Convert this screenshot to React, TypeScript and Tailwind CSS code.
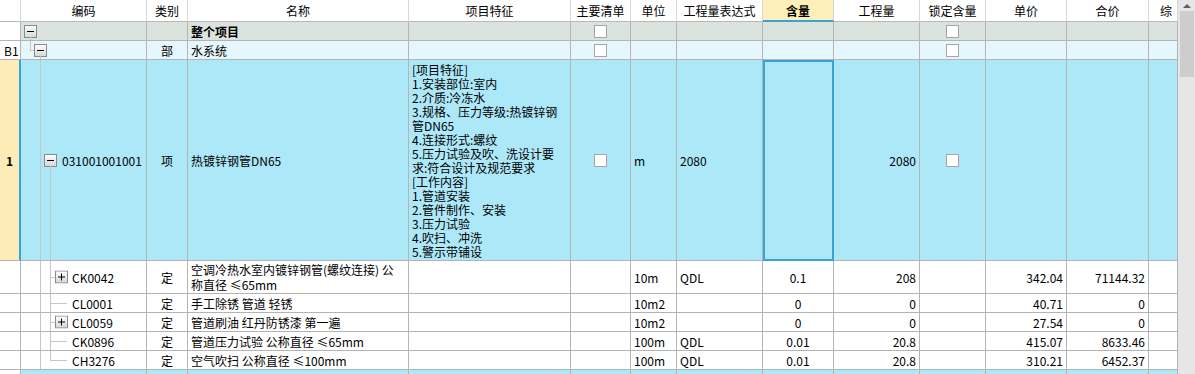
import React from "react";

const grid =
  "grid shrink-0 grid-cols-[21px_126px_41px_221px_162px_60px_46px_86px_71px_86px_66px_81px_82px_29px]";
const cell =
  "border-r border-b border-[#b4b4b4] flex items-center pt-px px-[3px] whitespace-nowrap overflow-hidden";
const line = "absolute bg-[#c6c6c6]";

const TreeBox = ({ plus = false }: { plus?: boolean }) => (
  <svg width="13" height="13" viewBox="0 0 13 13" className="block">
    <defs>
      <linearGradient id="tb" x1="0" y1="0" x2="0" y2="1">
        <stop offset="0" stopColor="#ffffff" />
        <stop offset="1" stopColor="#d6d6d6" />
      </linearGradient>
    </defs>
    <rect x="0.5" y="0.5" width="12" height="12" fill="url(#tb)" stroke="#8a8a8a" />
    <path d="M3 6.5h7" stroke="#000" strokeWidth="1" />
    {plus && <path d="M6.5 3v7" stroke="#000" strokeWidth="1" />}
  </svg>
);

const Check = () => (
  <span className="block w-[13px] h-[13px] bg-white border border-[#a6a6a6]" />
);

const features = [
  "[项目特征]",
  "1.安装部位:室内",
  "2.介质:冷冻水",
  "3.规格、压力等级:热镀锌钢",
  "管DN65",
  "4.连接形式:螺纹",
  "5.压力试验及吹、洗设计要",
  "求:符合设计及规范要求",
  "[工作内容]",
  "1.管道安装",
  "2.管件制作、安装",
  "3.压力试验",
  "4.吹扫、冲洗",
  "5.警示带铺设",
];

type Sub = {
  code: string;
  plus: boolean;
  name: React.ReactNode;
  unit: string;
  expr: string;
  hl: string;
  qty: string;
  price: string;
  total: string;
  tall?: boolean;
  last?: boolean;
};

const subs: Sub[] = [
  {
    code: "CK0042",
    plus: true,
    name: (
      <>
        空调冷热水室内镀锌钢管(螺纹连接) 公<br />
        称直径 ≤65mm
      </>
    ),
    unit: "10m",
    expr: "QDL",
    hl: "0.1",
    qty: "208",
    price: "342.04",
    total: "71144.32",
    tall: true,
  },
  { code: "CL0001", plus: false, name: "手工除锈 管道 轻锈", unit: "10m2", expr: "", hl: "0", qty: "0", price: "40.71", total: "0" },
  { code: "CL0059", plus: true, name: "管道刷油 红丹防锈漆 第一遍", unit: "10m2", expr: "", hl: "0", qty: "0", price: "27.54", total: "0" },
  { code: "CK0896", plus: false, name: "管道压力试验 公称直径 ≤65mm", unit: "100m", expr: "QDL", hl: "0.01", qty: "20.8", price: "415.07", total: "8633.46" },
  { code: "CH3276", plus: false, name: "空气吹扫 公称直径 ≤100mm", unit: "100m", expr: "QDL", hl: "0.01", qty: "20.8", price: "310.21", total: "6452.37", last: true },
];

const headers = ["", "编码", "类别", "名称", "项目特征", "主要清单", "单位", "工程量表达式", "含量", "工程量", "锁定含量", "单价", "合价", "综"];

export default function App() {
  return (
    <div className="flex w-[1195px] h-[374px] overflow-hidden bg-white text-[12px] text-black font-['Noto_Sans_CJK_SC','Liberation_Sans',sans-serif]">
      <div className="w-[1178px] flex flex-col">
        {/* header */}
        <div className={`${grid} h-[22px]`}>
          {headers.map((h, i) =>
            i === 8 ? (
              <div
                key={i}
                className="flex items-center justify-center pt-px bg-[#fdefb9] border-r border-[#d4d4d4] border-b-2 border-b-[#3aa3d5] font-bold"
              >
                {h}
              </div>
            ) : (
              <div
                key={i}
                className={`flex items-center pt-px whitespace-nowrap overflow-hidden border-r border-[#d8d8d8] border-b border-b-[#b8b8b8] ${
                  i === 13 ? "pl-[11px]" : "justify-center"
                }`}
              >
                {h}
              </div>
            )
          )}
        </div>

        {/* 整个项目 */}
        <div className={`${grid} h-[19px] bg-[#dbe3df]`}>
          <div className={`${cell} bg-white`} />
          <div className={`${cell} relative`}>
            <span className="absolute left-[3px] top-[3px]">
              <TreeBox />
            </span>
            <span className={`${line} left-[9px] top-[15px] w-px h-[4px]`} />
          </div>
          <div className={cell} />
          <div className={`${cell} font-bold`}>整个项目</div>
          <div className={cell} />
          <div className={`${cell} justify-center`}>
            <Check />
          </div>
          <div className={cell} />
          <div className={cell} />
          <div className={cell} />
          <div className={cell} />
          <div className={`${cell} justify-center`}>
            <Check />
          </div>
          <div className={cell} />
          <div className={cell} />
          <div className={cell} />
        </div>

        {/* 水系统 */}
        <div className={`${grid} h-[19px] bg-[#e5f7fc]`}>
          <div className={`${cell} bg-white pl-[4px]`}>B1</div>
          <div className={`${cell} relative`}>
            <span className={`${line} left-[9px] top-0 w-px h-[9px]`} />
            <span className={`${line} left-[9px] top-[9px] w-[4px] h-px`} />
            <span className="absolute left-[13px] top-[3px]">
              <TreeBox />
            </span>
            <span className={`${line} left-[19px] top-[15px] w-px h-[4px]`} />
          </div>
          <div className={`${cell} justify-center`}>部</div>
          <div className={cell}>水系统</div>
          <div className={cell} />
          <div className={`${cell} justify-center`}>
            <Check />
          </div>
          <div className={cell} />
          <div className={cell} />
          <div className={cell} />
          <div className={cell} />
          <div className={`${cell} justify-center`}>
            <Check />
          </div>
          <div className={cell} />
          <div className={cell} />
          <div className={cell} />
        </div>

        {/* 清单 1 */}
        <div className={`${grid} h-[201px] bg-[#ade8f9]`}>
          <div className={`${cell} bg-[#fdecb5] border-r-2 border-r-[#3aa3d5] justify-center font-bold`}>1</div>
          <div className={`${cell} relative pl-[41px]`}>
            <span className={`${line} left-[19px] top-0 w-px h-full`} />
            <span className="absolute left-[23px] top-[94px]">
              <TreeBox />
            </span>
            <span className={`${line} left-[29px] top-[106px] w-px h-[95px]`} />
            031001001001
          </div>
          <div className={`${cell} justify-center`}>项</div>
          <div className={cell}>热镀锌钢管DN65</div>
          <div className="border-r border-b border-[#b4b4b4] flex flex-col items-start pt-[3px] px-[3px] whitespace-nowrap overflow-hidden">
            {features.map((f) => (
              <span key={f} className="block h-[14px] leading-[14px]">
                {f}
              </span>
            ))}
          </div>
          <div className={`${cell} justify-center`}>
            <Check />
          </div>
          <div className={cell}>m</div>
          <div className={cell}>2080</div>
          <div className="border-2 border-[#3aa3d5]" />
          <div className={`${cell} justify-end`}>2080</div>
          <div className={`${cell} justify-center`}>
            <Check />
          </div>
          <div className={cell} />
          <div className={cell} />
          <div className={cell} />
        </div>

        {/* 定额 */}
        {subs.map((s) => (
          <div key={s.code} className={`${grid} ${s.tall ? "h-[33px]" : "h-[19px]"} bg-white`}>
            <div className={cell} />
            <div className={`${cell} relative pl-[51px]`}>
              <span className={`${line} left-[19px] top-0 w-px h-full`} />
              <span
                className={`${line} left-[29px] top-0 w-px ${s.last ? "h-1/2" : "h-full"}`}
              />
              <span className={`${line} left-[29px] top-1/2 ${s.plus ? "w-[5px]" : "w-[17px]"} h-px`} />
              {s.plus && (
                <span className="absolute left-[34px] top-1/2 -translate-y-1/2">
                  <TreeBox plus />
                </span>
              )}
              {s.code}
            </div>
            <div className={`${cell} justify-center`}>定</div>
            <div className={`${cell} ${s.tall ? "items-start pt-[2px]" : ""}`}>
              <span className={s.tall ? "leading-[15px]" : ""}>{s.name}</span>
            </div>
            <div className={cell} />
            <div className={cell} />
            <div className={cell}>{s.unit}</div>
            <div className={cell}>{s.expr}</div>
            <div className={`${cell} justify-center`}>{s.hl}</div>
            <div className={`${cell} justify-end`}>{s.qty}</div>
            <div className={cell} />
            <div className={`${cell} justify-end`}>{s.price}</div>
            <div className={`${cell} justify-end`}>{s.total}</div>
            <div className={cell} />
          </div>
        ))}

        {/* next row, cut off */}
        <div className={`${grid} h-[10px] bg-[#ade8f9]`}>
          {headers.map((_, i) => (
            <div key={i} className={`border-r border-[#b4b4b4] ${i === 0 ? "bg-white" : ""}`} />
          ))}
        </div>
      </div>

      {/* scrollbar */}
      <div className="w-[17px] h-full bg-[#e6e6e6] flex flex-col items-center">
        <div className="h-[11px] flex items-center justify-center">
          <span className="w-0 h-0 border-l-[4px] border-r-[4px] border-b-[4px] border-l-transparent border-r-transparent border-b-[#606060]" />
        </div>
        <div className="w-[14px] h-[66px] bg-[#cdcdcd]" />
      </div>
    </div>
  );
}
